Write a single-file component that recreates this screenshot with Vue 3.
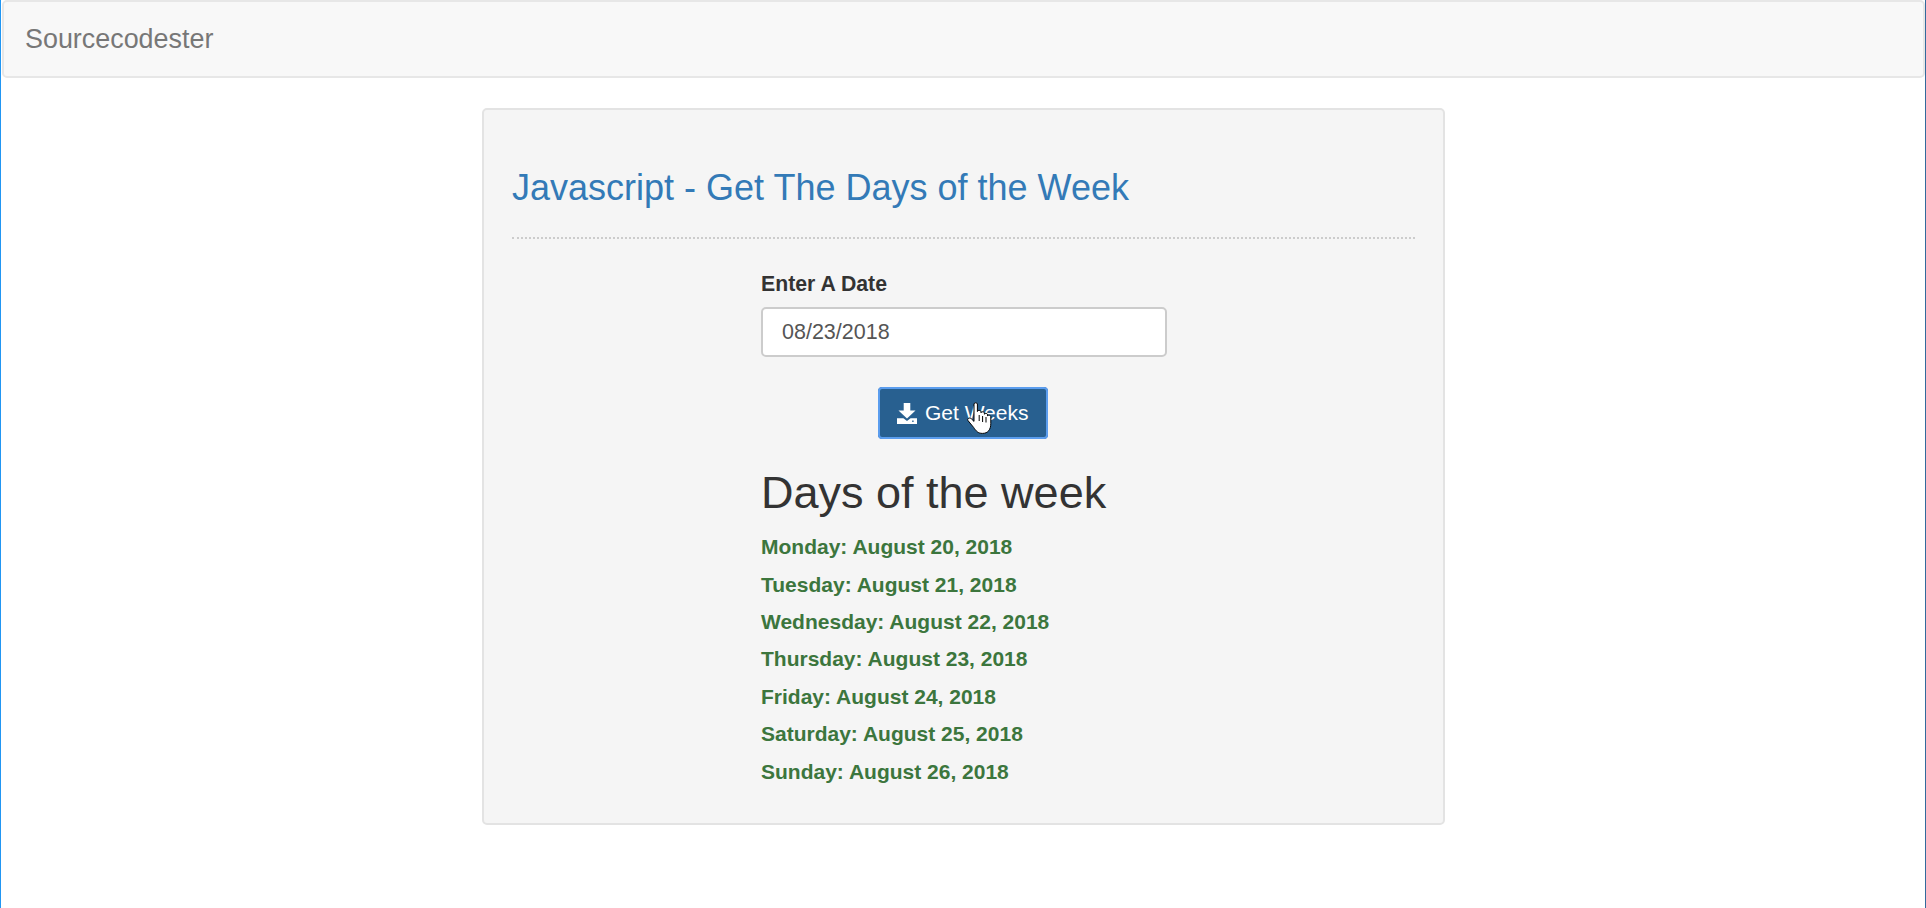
<script setup>
const days = [
  'Monday: August 20, 2018',
  'Tuesday: August 21, 2018',
  'Wednesday: August 22, 2018',
  'Thursday: August 23, 2018',
  'Friday: August 24, 2018',
  'Saturday: August 25, 2018',
  'Sunday: August 26, 2018'
]
</script>

<template>
  <div class="page">
    <nav class="navbar">
      <a class="brand">Sourcecodester</a>
    </nav>

    <div class="well">
      <h3 class="title">Javascript - Get The Days of the Week</h3>
      <hr class="dots" />

      <div class="col">
        <label class="label">Enter A Date</label>
        <input class="date" type="text" value="08/23/2018" />

        <div class="btn-row">
          <button class="btn" type="button">
            <svg class="icon" viewBox="0 0 20 21" width="20" height="21">
              <path fill="#fff" d="M6.7 0H13.3V7.5H18.5L10 15.5 1.5 7.5H6.7Z" />
              <path fill="#fff" fill-rule="evenodd" d="M0 15.2H6.4L10 18 13.6 15.2H20V21H0ZM15.2 17.6V19H16.6V17.6Z" />
            </svg>
            <span>Get Weeks</span>
            <!-- hand cursor sitting on the button -->
            <svg class="cursor" viewBox="0 0 25 32" width="25" height="32">
              <path
                fill="#fff"
                stroke="#000"
                stroke-width="1"
                stroke-linejoin="round"
                d="M7 2C7 .4 10.4 .4 10.4 2V9.5C10.4 8 14 8 14 9.8V10.8C14 9.4 17.4 9.4 17.4 11.2V12.2C17.4 11 20.6 11 20.6 12.8V14C20.6 12.8 23.8 12.8 23.8 14.8V21.5C23.8 27.5 21 31.4 15.5 31.4C11 31.4 9 29 6.6 25.4L1 18.6C-.2 16.8 2.4 15 4.2 16.6L7 19.4Z"
              />
              <path stroke="#000" stroke-width="1" d="M12.2 13V19M15.6 14V20M19 15V20.5" />
            </svg>
          </button>
        </div>

        <h2 class="heading">Days of the week</h2>
        <div class="days">
          <div v-for="d in days" :key="d" class="day">{{ d }}</div>
        </div>
      </div>
    </div>
  </div>
</template>

<style scoped>
.page {
  box-sizing: border-box;
  height: 908px;
  border-left: 1px solid #2196f3;
  border-right: 1px solid #336a9c;
  padding-left: 1px;
  font-family: "Liberation Sans", Arial, sans-serif;
  color: #333;
  overflow: hidden;
}

.navbar {
  box-sizing: border-box;
  height: 78px;
  padding: 0 21px;
  display: flex;
  align-items: center;
  background: #f8f8f8;
  border: 2px solid #e7e7e7;
  border-radius: 5px;
}

.brand {
  font-size: 26.9px;
  color: #777;
}

.well {
  box-sizing: border-box;
  width: 963px;
  height: 717px;
  margin: 30px 0 0 480px;
  padding: 0 28px;
  background: #f5f5f5;
  border: 2px solid #e3e3e3;
  border-radius: 5px;
}

.title {
  margin: 0;
  padding-top: 57px;
  font-size: 36px;
  line-height: 41px;
  font-weight: 400;
  color: #337ab7;
}

.dots {
  margin: 29px 0 0;
  border: 0;
  border-top: 2px dotted #ccc;
}

.col {
  width: 406px;
  margin-left: 249px;
  padding-top: 33px;
}

.label {
  display: block;
  font-size: 21.25px;
  line-height: 24px;
  font-weight: 700;
}

.date {
  display: block;
  box-sizing: border-box;
  width: 406px;
  height: 50px;
  margin-top: 11px;
  padding: 0 19px;
  background: #fff;
  border: 2px solid #ccc;
  border-radius: 5px;
  font-family: inherit;
  font-size: 21.5px;
  color: #555;
  outline: none;
}

.btn-row {
  display: flex;
  justify-content: center;
  margin-top: 30px;
  padding-right: 2px;
}

.btn {
  position: relative;
  box-sizing: border-box;
  display: flex;
  align-items: center;
  gap: 8px;
  width: 170px;
  height: 52px;
  padding: 0 0 0 18px;
  background: #286090;
  border: 1px solid #204d74;
  outline: 2px solid #5b9dee;
  outline-offset: -2px;
  border-radius: 4px;
  font-family: inherit;
  font-size: 21px;
  color: #fff;
}

.icon {
  flex: none;
}

.cursor {
  position: absolute;
  left: 88px;
  top: 14px;
}

.heading {
  margin: 28px 0 0;
  font-size: 45px;
  line-height: 52px;
  font-weight: 400;
}

.days {
  margin-top: 9.2px;
}

.day {
  height: 37.4px;
  line-height: 37.4px;
  font-size: 21px;
  font-weight: 700;
  color: #3c763d;
}
</style>
